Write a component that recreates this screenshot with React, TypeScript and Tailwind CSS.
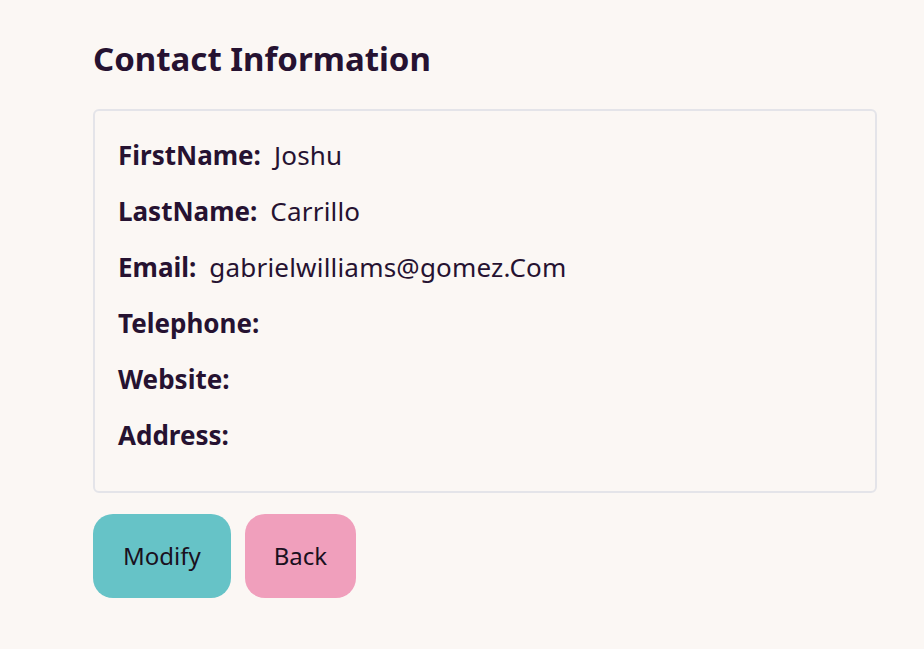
const rows: { label: string; value: string }[] = [
  { label: "FirstName:", value: "Joshu" },
  { label: "LastName:", value: "Carrillo" },
  { label: "Email:", value: "gabrielwilliams@gomez.Com" },
  { label: "Telephone:", value: "" },
  { label: "Website:", value: "" },
  { label: "Address:", value: "" },
];

export default function App() {
  return (
    <div
      className="min-h-[649px] bg-[#fbf7f4] text-[#261231] pt-[36px] pl-[93px]"
      style={{ fontFamily: '"Noto Sans", "Open Sans", sans-serif' }}
    >
      <h2 className="text-[33px] font-bold leading-[46px] m-0">Contact Information</h2>
      <div className="mt-[27px] w-[784px] border-2 border-[#e4e4e9] rounded-[6px] pt-[28px] pb-[40px] pl-[23px] flex flex-col gap-[24px]">
        {rows.map((r) => (
          <p key={r.label} className="text-[26px] leading-[32px] m-0">
            <span className="font-bold">{r.label}</span>
            {r.value && <span className="ml-[13px] tracking-[0.2px]">{r.value}</span>}
          </p>
        ))}
      </div>
      <div className="mt-[21px] flex gap-[14px]">
        <button className="h-[84px] px-[30px] rounded-[20px] bg-[#66c3c7] text-[24px] text-[#1a1020]">
          Modify
        </button>
        <button className="h-[84px] px-[29px] rounded-[20px] bg-[#f09fbc] text-[24px] text-[#1a1020]">
          Back
        </button>
      </div>
    </div>
  );
}
